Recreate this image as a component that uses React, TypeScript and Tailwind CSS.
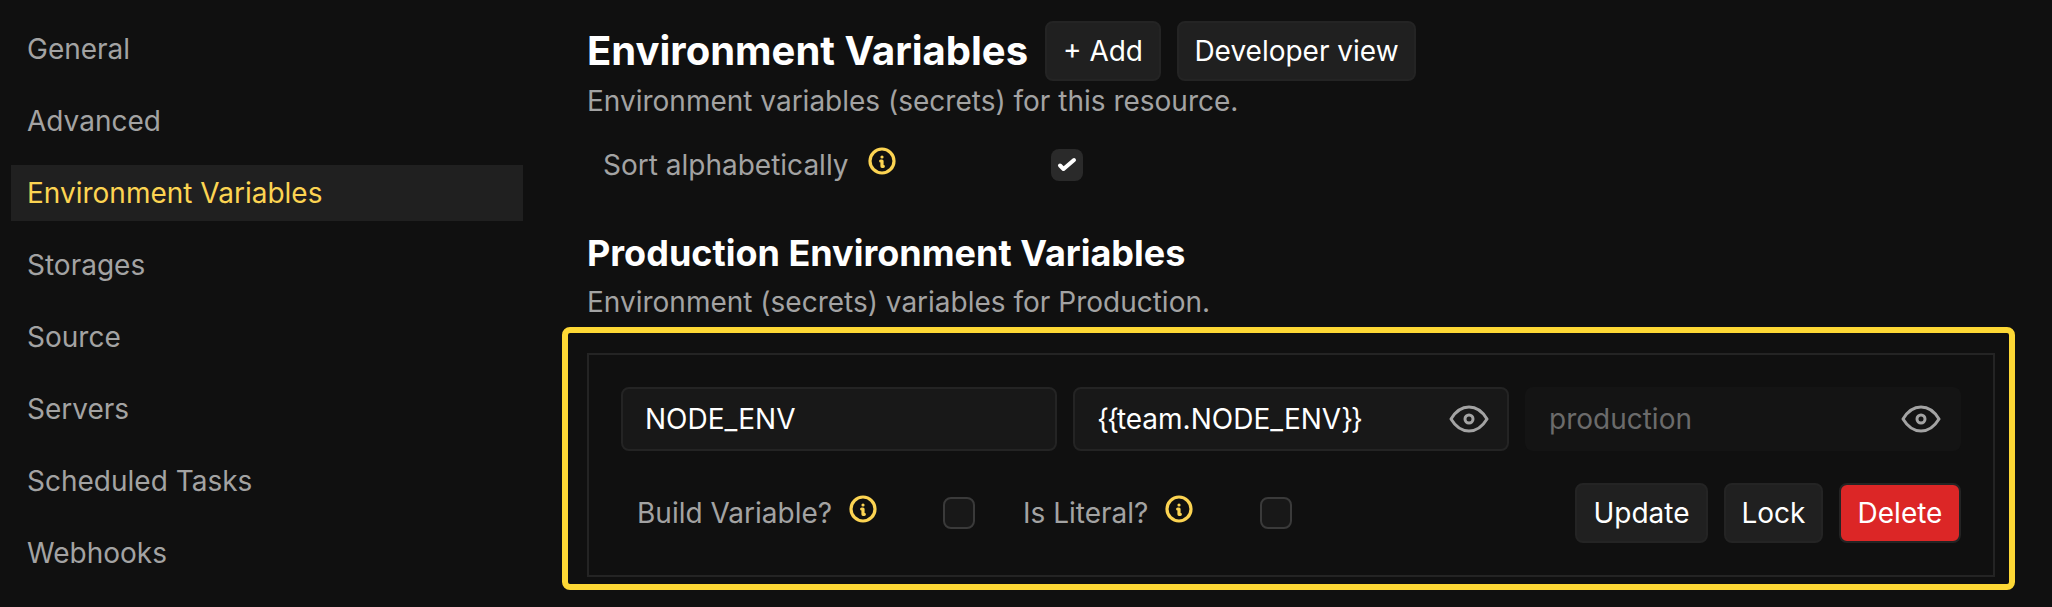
const font = { fontFamily: "Inter, sans-serif" };

function Info() {
  return (
    <svg width="32" height="32" viewBox="0 0 24 24" fill="none" stroke="#fcd452" strokeWidth="2.4" strokeLinecap="round" strokeLinejoin="round" className="shrink-0 -translate-y-1">
      <path d="M3 12a9 9 0 1 0 18 0a9 9 0 0 0-18 0m9-3h.01M11 12h1v4h1" />
    </svg>
  );
}

function Eye() {
  return (
    <svg width="48" height="48" viewBox="0 0 24 24" fill="none" stroke="#a3a3a3" strokeWidth="1.5" strokeLinecap="round" strokeLinejoin="round" className="shrink-0">
      <path d="M10 12a2 2 0 1 0 4 0a2 2 0 0 0-4 0" />
      <path d="M21 12c-2.4 4-5.4 6-9 6c-3.6 0-6.6-2-9-6c2.4-4 5.4-6 9-6c3.6 0 6.6 2 9 6" />
    </svg>
  );
}

const items = ["General", "Advanced", "Environment Variables", "Storages", "Source", "Servers", "Scheduled Tasks", "Webhooks"];

export default function App() {
  return (
    <div style={font} className="flex h-[607px] w-[2052px] overflow-hidden bg-[#101010] text-[28px] text-[#a3a3a3]">
      <nav className="flex w-[562px] shrink-0 flex-col gap-4 pl-[11px] pt-[21px]">
        {items.map((t) => (
          <div key={t} className={`flex h-14 w-[512px] shrink-0 items-center pl-4 ${t === "Environment Variables" ? "bg-[#202020] text-[#fcd452]" : ""}`}>
            {t}
          </div>
        ))}
      </nav>
      <main className="w-[1453px] shrink-0">
        <div className="flex items-center pl-[25px] pt-[21px]">
          <h1 className="w-[458px] text-[40px] font-bold leading-[60px] text-white">Environment Variables</h1>
          <button className="h-[60px] w-[116px] rounded-lg border-2 border-[#242424] bg-[#202020] text-white">+ Add</button>
          <button className="ml-4 h-[60px] w-[239px] rounded-lg border-2 border-[#242424] bg-[#202020] text-white">Developer view</button>
        </div>
        <p className="pl-[25px] leading-[40px]">Environment variables (secrets) for this resource.</p>
        <div className="mt-[28px] flex h-[32px] items-center pl-[41px]">
          <span className="w-[263px]">Sort alphabetically</span>
          <Info />
          <span className="ml-[153px] flex h-8 w-8 items-center justify-center rounded-lg bg-[#2a2a2a]">
            <svg width="20" height="20" viewBox="0 0 20 20" fill="none" stroke="white" strokeWidth="4" strokeLinecap="round" strokeLinejoin="round">
              <path d="M3 10.5l3.5 3.5L17 5" />
            </svg>
          </span>
        </div>
        <h2 className="mt-[50px] pl-[25px] text-[36px] font-bold leading-[44px] text-white">Production Environment Variables</h2>
        <p className="mt-[7px] pl-[25px] leading-[40px]">Environment (secrets) variables for Production.</p>
        <div className="mt-[5px] h-[263px] rounded-lg border-[6px] border-[#fdd835] pl-[19px] pr-[14px] pt-5">
          <div className="h-[224px] border-2 border-[#242424] px-8 pt-8">
            <div className="grid grid-cols-3 gap-4">
              <div className="flex h-[64px] items-center rounded-lg border-2 border-[#242424] bg-[#181818] pl-[22px] text-white">NODE_ENV</div>
              <div className="flex h-[64px] items-center justify-between rounded-lg border-2 border-[#242424] bg-[#181818] pl-[22px] pr-[14px] text-white">
                <span>
                  <span className="tracking-[-2px]">{"{{"}</span>team.NODE_ENV<span className="tracking-[-2px]">{"}}"}</span>
                </span>
                <Eye />
              </div>
              <div className="flex h-[64px] items-center justify-between rounded-lg bg-[#141414] pl-6 pr-4 text-[#6b6b6b]">production<Eye /></div>
            </div>
            <div className="mt-8 flex items-center">
              <div className="flex items-center pl-4">
                <span className="w-[210px]">Build Variable?</span>
                <Info />
                <span className="ml-[64px] h-8 w-8 rounded-lg border-2 border-[#3a3a3a] bg-[#181818]" />
              </div>
              <div className="ml-[48px] flex items-center">
                <span className="w-[140px]">Is Literal?</span>
                <Info />
                <span className="ml-[65px] h-8 w-8 rounded-lg border-2 border-[#3a3a3a] bg-[#181818]" />
              </div>
              <div className="ml-auto flex gap-4">
                <button className="h-[60px] w-[133px] rounded-lg border-2 border-[#242424] bg-[#202020] text-white">Update</button>
                <button className="h-[60px] w-[99px] rounded-lg border-2 border-[#242424] bg-[#202020] text-white">Lock</button>
                <button className="h-[60px] w-[122px] rounded-lg border-2 border-[#242424] bg-[#dc2626] text-white">Delete</button>
              </div>
            </div>
          </div>
        </div>
      </main>
    </div>
  );
}
